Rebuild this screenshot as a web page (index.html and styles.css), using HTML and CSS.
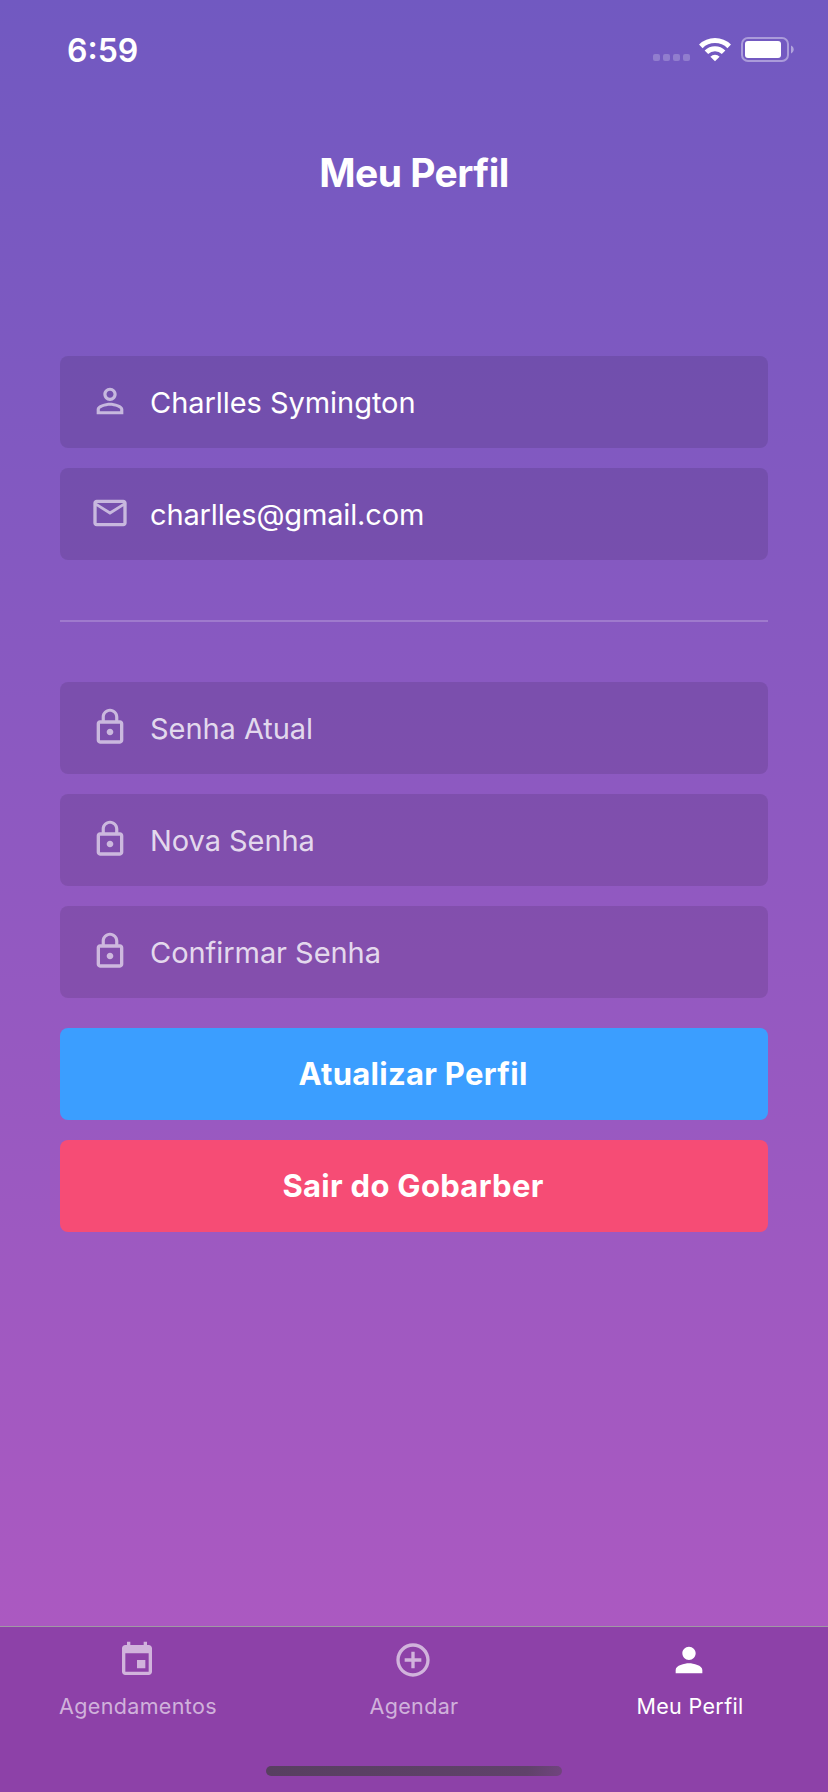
FILE: index.html
```html
<!DOCTYPE html>
<html lang="pt-BR">
<head>
<meta charset="utf-8">
<title>Meu Perfil</title>
<link rel="stylesheet" href="styles.css">
</head>
<body>
<div class="app">
  <header class="status">
    <span class="clock">6:59</span>
    <div class="indicators">
      <div class="signal"><i></i><i></i><i></i><i></i></div>
      <svg class="wifi" width="32" height="25" viewBox="0 0 32 25">
        <g fill="none" stroke="#fff" stroke-width="5">
          <path d="M1.8 9.4a20.2 20.2 0 0 1 28.4 0"/>
          <path d="M7.4 15.3a12.2 12.2 0 0 1 17.2 0"/>
        </g>
        <path fill="#fff" d="M16 24.2l-4.6-4.5a6.6 6.6 0 0 1 9.2 0z"/>
      </svg>
      <svg class="battery" width="54" height="26" viewBox="0 0 54 26">
        <rect x="1" y="1" width="46" height="23" rx="6" fill="none" stroke="#fff" stroke-opacity=".4" stroke-width="2"/>
        <rect x="4" y="4" width="36" height="17" rx="3" fill="#fff"/>
        <path d="M50 8.5c1.700.8 2.700 2.200 2.700 4s-1 3.200-2.700 4z" fill="#fff" fill-opacity=".45"/>
      </svg>
    </div>
  </header>

  <main class="content">
    <h1 class="title">Meu Perfil</h1>
    <form class="form">
      <label class="field">
        <svg class="icon" viewBox="0 0 24 24"><path d="M12 5.9c1.160 0 2.100.94 2.100 2.100s-.94 2.100-2.100 2.100S9.900 9.160 9.900 8s.94-2.100 2.100-2.100m0 9c2.970 0 6.100 1.460 6.100 2.100v1.100H5.900V17c0-.64 3.130-2.100 6.100-2.100M12 4C9.790 4 8 5.790 8 8s1.790 4 4 4 4-1.790 4-4-1.790-4-4-4zm0 9c-2.670 0-8 1.340-8 4v3h16v-3c0-2.660-5.330-4-8-4z"/></svg>
        <input class="input" type="text" value="Charlles Symington">
      </label>
      <label class="field">
        <svg class="icon" viewBox="0 0 24 24"><path d="M20 4H4c-1.100 0-1.990.9-1.990 2L2 18c0 1.100.9 2 2 2h16c1.100 0 2-.9 2-2V6c0-1.100-.9-2-2-2zm0 14H4V8l8 5 8-5v10zm-8-7L4 6h16l-8 5z"/></svg>
        <input class="input email" type="text" value="charlles@gmail.com">
      </label>
      <div class="separator"></div>
      <label class="field">
        <svg class="icon" viewBox="0 0 24 24"><path d="M12 17c1.100 0 2-.9 2-2s-.9-2-2-2-2 .9-2 2 .9 2 2 2zm6-9h-1V6c0-2.760-2.240-5-5-5S7 3.240 7 6v2H6c-1.100 0-2 .9-2 2v10c0 1.100.9 2 2 2h12c1.100 0 2-.9 2-2V10c0-1.100-.9-2-2-2zM8.900 6c0-1.710 1.390-3.100 3.100-3.100s3.100 1.390 3.100 3.100v2H8.900V6zM18 20H6V10h12v10z"/></svg>
        <input class="input" type="password" placeholder="Senha Atual">
      </label>
      <label class="field">
        <svg class="icon" viewBox="0 0 24 24"><path d="M12 17c1.100 0 2-.9 2-2s-.9-2-2-2-2 .9-2 2 .9 2 2 2zm6-9h-1V6c0-2.760-2.240-5-5-5S7 3.240 7 6v2H6c-1.100 0-2 .9-2 2v10c0 1.100.9 2 2 2h12c1.100 0 2-.9 2-2V10c0-1.100-.9-2-2-2zM8.900 6c0-1.710 1.390-3.100 3.100-3.100s3.100 1.390 3.100 3.100v2H8.900V6zM18 20H6V10h12v10z"/></svg>
        <input class="input" type="password" placeholder="Nova Senha">
      </label>
      <label class="field">
        <svg class="icon" viewBox="0 0 24 24"><path d="M12 17c1.100 0 2-.9 2-2s-.9-2-2-2-2 .9-2 2 .9 2 2 2zm6-9h-1V6c0-2.760-2.240-5-5-5S7 3.240 7 6v2H6c-1.100 0-2 .9-2 2v10c0 1.100.9 2 2 2h12c1.100 0 2-.9 2-2V10c0-1.100-.9-2-2-2zM8.900 6c0-1.710 1.390-3.100 3.100-3.100s3.100 1.390 3.100 3.100v2H8.900V6zM18 20H6V10h12v10z"/></svg>
        <input class="input" type="password" placeholder="Confirmar Senha">
      </label>
      <button class="button update" type="button">Atualizar Perfil</button>
      <button class="button logout" type="button">Sair do Gobarber</button>
    </form>
  </main>

  <nav class="tabs">
    <div class="tab-row">
      <a class="tab">
        <svg class="tab-icon" viewBox="0 0 24 24"><path d="M17 12h-5v5h5v-5zM16 1v2H8V1H6v2H5c-1.110 0-1.990.9-1.990 2L3 19c0 1.100.89 2 2 2h14c1.100 0 2-.9 2-2V5c0-1.100-.9-2-2-2h-1V1h-2zm3 18H5V8h14v11z"/></svg>
        <span class="tab-label">Agendamentos</span>
      </a>
      <a class="tab">
        <svg class="tab-icon" viewBox="0 0 24 24"><path d="M13 7h-2v4H7v2h4v4h2v-4h4v-2h-4V7zm-1-5C6.480 2 2 6.480 2 12s4.480 10 10 10 10-4.480 10-10S17.520 2 12 2zm0 18c-4.410 0-8-3.590-8-8s3.590-8 8-8 8 3.590 8 8-3.590 8-8 8z"/></svg>
        <span class="tab-label">Agendar</span>
      </a>
      <a class="tab active">
        <svg class="tab-icon" viewBox="0 0 24 24"><path d="M12 12c2.210 0 4-1.790 4-4s-1.790-4-4-4-4 1.790-4 4 1.790 4 4 4zm0 2c-2.670 0-8 1.340-8 4v2h16v-2c0-2.660-5.330-4-8-4z"/></svg>
        <span class="tab-label">Meu Perfil</span>
      </a>
    </div>
    <div class="home-indicator"></div>
  </nav>
</div>
</body>
</html>
```
FILE: styles.css
```css
* { box-sizing: border-box; }

body {
  margin: 0;
  font-family: Inter, "Liberation Sans", sans-serif;
  color: #fff;
}

.app {
  display: flex;
  flex-direction: column;
  width: 828px;
  height: 1792px;
  overflow: hidden;
  background: linear-gradient(#7159c1 0, #ab59c1 1626px);
}

.status {
  display: flex;
  justify-content: space-between;
  align-items: flex-start;
  height: 88px;
  padding: 30px 34px 0 67px;
}

.clock {
  padding-top: 1px;
  font-size: 32px;
  line-height: 40px;
  font-weight: 600;
}

.indicators {
  display: flex;
  align-items: flex-start;
  padding-top: 7px;
}

.signal {
  display: flex;
  gap: 3px;
  margin: 17px 9px 0 0;
}

.signal i {
  width: 7px;
  height: 7px;
  border-radius: 2px;
  background: rgba(255, 255, 255, 0.22);
}

.battery { margin-left: 10px; margin-right: -1px; }

.content {
  flex: 1;
  padding: 60px 60px 0;
}

.title {
  margin: 0 0 158px;
  font-size: 39px;
  line-height: 50px;
  font-weight: 700;
  letter-spacing: -0.55px;
  text-align: center;
}

.form {
  display: flex;
  flex-direction: column;
  gap: 20px;
}

.field {
  display: flex;
  align-items: center;
  height: 92px;
  padding: 0 30px;
  border-radius: 8px;
  background: rgba(0, 0, 0, 0.1);
}

.icon {
  flex: none;
  width: 40px;
  height: 40px;
  margin-top: -2px;
  fill: rgba(255, 255, 255, 0.6);
}

.input {
  flex: 1;
  height: 92px;
  margin-left: 20px;
  padding: 0;
  border: 0;
  outline: 0;
  background: none;
  color: #fff;
  font: 400 29px Inter, sans-serif;
  letter-spacing: -0.05px;
}

.input.email { letter-spacing: -0.15px; }

.input::placeholder { color: rgba(255, 255, 255, 0.8); }

.separator {
  height: 2px;
  margin: 40px 0;
  background: rgba(255, 255, 255, 0.2);
}

.button {
  height: 92px;
  padding: 0 2px 2px 0;
  border: 0;
  border-radius: 8px;
  color: #fff;
  font: 700 31px Inter, sans-serif;
  letter-spacing: 0.3px;
}

.update { margin-top: 10px; background: #3b9eff; }
.logout { background: #f64c75; }

.tabs {
  height: 166px;
  border-top: 1px solid #a198a5;
  background: #8d41a8;
}

.tab-row { display: flex; height: 139px; }

.tab {
  display: flex;
  flex: 1;
  flex-direction: column;
  align-items: center;
  padding-top: 13px;
  color: rgba(255, 255, 255, 0.6);
}

.tab.active { color: #fff; }

.tab-icon {
  width: 40px;
  height: 40px;
  margin-left: -2px;
  fill: currentColor;
}

.tab-label {
  margin-top: 12px;
  font-size: 21.5px;
  line-height: 28px;
  letter-spacing: 0.35px;
}

.home-indicator {
  width: 296px;
  height: 10px;
  margin: 0 auto;
  border-radius: 5px;
  background: linear-gradient(100deg, #583f60 0%, #60426a 88%, #71447f 100%);
}
```
